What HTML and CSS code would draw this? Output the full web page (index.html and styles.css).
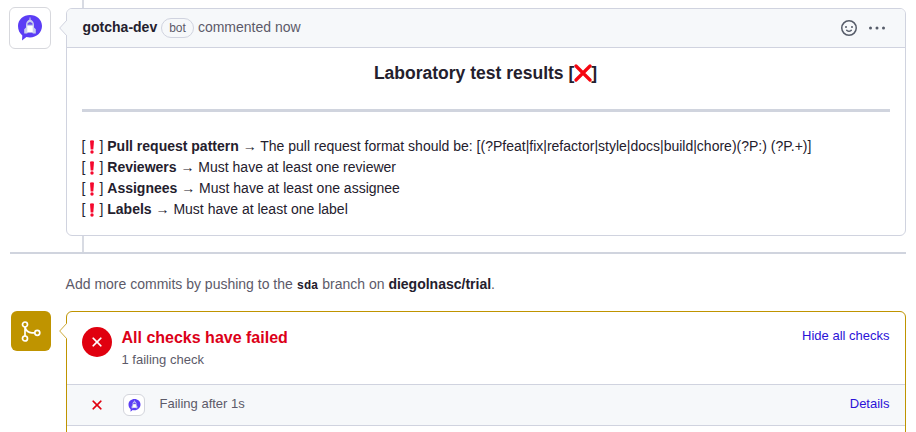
FILE: index.html
```html
<!DOCTYPE html>
<html lang="en">
<head>
<meta charset="utf-8">
<title>Pull request checks</title>
<link rel="stylesheet" href="styles.css">
</head>
<body>
<svg class="defs" width="0" height="0">
  <symbol id="rocket" viewBox="0 0 26 28">
    <path fill="#5b3df5" d="M13 2C19.500 2 25 6.500 25 13s-5.500 11.500-12 11.500c-1.300 0-2.500-.2-3.600-.5L5 27.500 5.300 22.400C2.600 20.300 1 17 1 13 1 6.500 6.500 2 13 2Z"/>
    <path fill="#c9cdf0" d="M12.500 4.500h1v2c2.300 1.200 3.500 3.200 3.500 5.500v2.500l1.800 1.800v4.200h-2.800l-1-.8h-4l-1 .8H7.200v-4.200L9 14.500V12c0-2.300 1.200-4.300 3.500-5.500Z"/>
    <path fill="#6a52ee" d="M10.500 10.500q2.500-3 5 0v1.300h-5Z"/>
    <path fill="#fff" d="M10.300 13h5.400v6h-5.400Z"/>
  </symbol>
  <symbol id="x" viewBox="0 0 16 16">
    <path d="M3.720 3.720a.75.75 0 0 1 1.060 0L8 6.940l3.220-3.220a.75.75 0 1 1 1.060 1.060L9.060 8l3.220 3.220a.75.75 0 1 1-1.060 1.060L8 9.060l-3.220 3.220a.75.75 0 0 1-1.060-1.060L6.940 8 3.720 4.780a.75.75 0 0 1 0-1.060Z"/>
  </symbol>
  <symbol id="bang" viewBox="0 0 6 14">
    <path fill="#f5082d" d="M1 .8Q3-.2 5 .8L4.300 9.500H1.700Z"/>
    <circle cx="3" cy="12" r="1.700" fill="#f5082d"/>
  </symbol>
</svg>
<main class="page">
  <section class="timeline">
    <div class="avatar"><svg class="avatar-logo"><use href="#rocket"/></svg></div>
    <article class="comment">
      <svg class="pointer" viewBox="0 0 8 16"><path d="M8 0 .7 8 8 16" fill="#f6f8fa" stroke="#d0d3df"/></svg>
      <header class="comment-header">
        <strong class="author">gotcha-dev</strong>
        <span class="label">bot</span>
        <span class="when">commented now</span>
        <svg class="smile" viewBox="0 0 16 16"><path d="M8 0a8 8 0 1 1 0 16A8 8 0 0 1 8 0ZM1.500 8a6.500 6.500 0 1 0 13 0 6.500 6.500 0 0 0-13 0Zm3.820 1.636a.75.75 0 0 1 1.038.175l.007.009c.103.118.22.222.35.310.264.178.683.370 1.285.370.602 0 1.020-.192 1.285-.371.130-.088.247-.192.350-.310l.007-.008a.75.75 0 0 1 1.222.870l-.022.030c-.182.248-.422.464-.715.660C9.640 11.704 8.930 12 8 12s-1.640-.296-2.127-.630a3.200 3.200 0 0 1-.715-.659.750.750 0 0 1 .162-1.075ZM12 7a1 1 0 1 1-2 0 1 1 0 0 1 2 0ZM5 8a1 1 0 1 1 0-2 1 1 0 0 1 0 2Z"/></svg>
        <svg class="dots" viewBox="0 0 16 16"><circle cx="1.500" cy="8" r="1.500"/><circle cx="8" cy="8" r="1.500"/><circle cx="14.500" cy="8" r="1.500"/></svg>
      </header>
      <div class="comment-body">
        <h3 class="title">Laboratory test results [<svg class="cross" viewBox="0 0 18 18"><path d="m2 2 14 14M16 2 2 16"/></svg>]</h3>
        <hr class="rule">
        <ul class="results">
          <li><span class="mark">[<svg class="bang"><use href="#bang"/></svg>]</span> <strong>Pull request pattern</strong> → The pull request format should be: [(?Pfeat|fix|refactor|style|docs|build|chore)(?P:) (?P.+)]</li>
          <li><span class="mark">[<svg class="bang"><use href="#bang"/></svg>]</span> <strong>Reviewers</strong> → Must have at least one reviewer</li>
          <li><span class="mark">[<svg class="bang"><use href="#bang"/></svg>]</span> <strong>Assignees</strong> → Must have at least one assignee</li>
          <li><span class="mark">[<svg class="bang"><use href="#bang"/></svg>]</span> <strong>Labels</strong> → Must have at least one label</li>
        </ul>
      </div>
    </article>
  </section>
  <p class="hint">Add more commits by pushing to the <code>sda</code> branch on <strong>diegolnasc/trial</strong>.</p>
  <section class="merge">
    <div class="merge-badge"><svg class="merge-icon" viewBox="0 0 22 22"><circle cx="5" cy="4.500" r="2.500"/><circle cx="5" cy="18.500" r="2.500"/><circle cx="17.300" cy="12.800" r="2.500"/><path d="M5 7v9M5 7c.8 3.400 3.600 5.800 7 5.800h2.800"/></svg></div>
    <div class="checks">
      <svg class="pointer" viewBox="0 0 8 16"><path d="M8 0 .7 8 8 16" fill="#fff" stroke="#cdaa3c"/></svg>
      <div class="summary">
        <div class="fail-circle"><svg><use href="#x"/></svg></div>
        <div class="summary-text">
          <h3>All checks have failed</h3>
          <p>1 failing check</p>
        </div>
        <a class="link">Hide all checks</a>
      </div>
      <div class="check">
        <svg class="check-x"><use href="#x"/></svg>
        <div class="check-avatar"><svg><use href="#rocket"/></svg></div>
        <span class="check-text">Failing after 1s</span>
        <a class="link">Details</a>
      </div>
    </div>
  </section>
</main>
</body>
</html>
```
FILE: styles.css
```css
* { box-sizing: border-box; }
body {
  margin: 0;
  background: #fff;
  color: #24202d;
  font: 14px/21px "Liberation Sans", Arial, sans-serif;
  overflow: hidden;
}
h3, p, ul, hr { margin: 0; padding: 0; }
svg { display: block; flex: none; }
.defs { position: absolute; }
.page { padding: 0 10px; height: 432px; overflow: hidden; }
.timeline {
  display: grid;
  grid-template-columns: 56px 1fr;
  height: 254px;
  padding: 8px 0 16px;
  border-bottom: 2px solid #d0d4de;
  background: linear-gradient(#d8dbe3, #d8dbe3) 72px 0 / 2px 100% no-repeat;
}
.avatar {
  display: flex;
  justify-content: center;
  width: 42px;
  height: 42px;
  margin: -1px 0 0 -1px;
  padding-top: 5px;
  border: 1px solid #d7d8dd;
  border-radius: 6px;
  background: #fff;
}
.avatar-logo { width: 26px; height: 28px; }
.comment, .checks {
  position: relative;
  border: 1px solid #d0d3df;
  border-radius: 6px;
  background: #fff;
}
.pointer { position: absolute; left: -8px; top: 11px; width: 8px; height: 16px; }
.comment-header {
  display: flex;
  align-items: center;
  height: 39px;
  padding: 0 20px 0 15.500px;
  border-bottom: 1px solid #d0d3df;
  border-radius: 5px 5px 0 0;
  background: #f6f8fa;
  color: #5c5a69;
}
.author, .when { padding-bottom: 2px; }
.author { color: #24202d; }
.label {
  margin: 0 4px;
  padding: 0 7px;
  border: 1px solid #d0d3df;
  border-radius: 10px;
  font-size: 12px;
  line-height: 18px;
}
.smile, .dots { width: 16px; height: 16px; fill: #565c69; }
.smile { margin-left: auto; }
.dots { margin-left: 12px; margin-bottom: 1px; }
.comment-body { padding: 14px 15px 15px; }
.title {
  display: flex;
  justify-content: center;
  padding-right: 1px;
  font-size: 17.500px;
  line-height: 22px;
  white-space: pre;
}
.cross { width: 18px; height: 18px; margin: 2px -.5px 0; fill: none; stroke: #f50610; stroke-width: 3.200; stroke-linecap: round; }
.rule { height: 3px; margin: 25px 0 24px; border: 0; background: #d0d4de; }
.results { margin-left: -.5px; list-style: none; }
.mark { display: inline-flex; width: 21.900px; justify-content: space-between; }
.bang { width: 6px; height: 14px; margin-top: 4px; }
.hint { margin: 20px 0 16px 55.600px; color: #5c5a69; }
.hint strong, .hint code { color: #24202d; }
.hint code { font: bold 12px "Liberation Mono", monospace; }
.merge { display: grid; grid-template-columns: 56px 1fr; }
.merge-badge {
  display: grid;
  place-items: center;
  width: 40px;
  height: 40px;
  margin-left: 1px;
  border-radius: 6px;
  background: #bf9400;
}
.merge-icon { width: 22px; height: 22px; margin: -1px 0 0 -1px; fill: none; stroke: #fff; stroke-width: 1.700; }
.checks { height: 140px; border-color: #bf9400; }
.summary { display: flex; height: 73px; padding: 15px 15.500px 0 15px; border-bottom: 1px solid #d0d3df; }
.fail-circle {
  display: grid;
  place-items: center;
  width: 30px;
  height: 30px;
  border-radius: 50%;
  background: #e0000f;
}
.fail-circle svg, .check-x { width: 16px; height: 16px; stroke-width: .3; }
.fail-circle svg { fill: #fff; stroke: #fff; }
.summary-text { margin-left: 9.500px; }
.summary-text h3 { color: #dc0018; font-size: 16px; line-height: 22px; }
.summary-text p { color: #5c5a69; font-size: 13px; line-height: 22px; }
.link { margin-left: auto; color: #2b12d8; font-size: 13px; line-height: 18px; }
.check {
  display: flex;
  align-items: center;
  height: 41px;
  padding: 0 15.500px 0 22px;
  border-bottom: 1px solid #d0d3df;
  background: #f6f8fa;
}
.check .link, .check-text { padding-bottom: 2px; }
.check-x { fill: #e0000f; stroke: #e0000f; }
.check-avatar {
  display: grid;
  place-items: center;
  width: 22px;
  height: 22px;
  margin: 0 14.500px 0 18px;
  border: 1px solid #d3d5dc;
  border-radius: 6px;
  background: #fff;
}
.check-avatar svg { width: 13px; height: 14px; }
.check-text { color: #5c5a69; font-size: 13px; line-height: 18px; }
```
